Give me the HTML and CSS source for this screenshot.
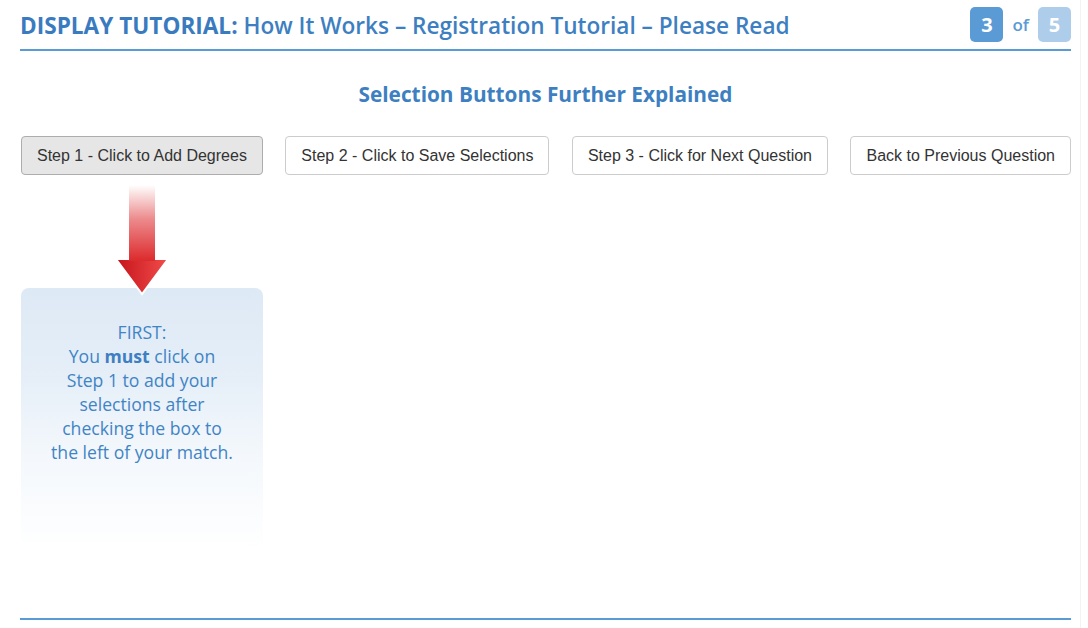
FILE: index.html
```html
<!DOCTYPE html>
<html lang="en">
<head>
<meta charset="utf-8">
<title>Display Tutorial</title>
<link rel="stylesheet" href="styles.css">
</head>
<body>
<div class="page">
  <header class="header">
    <h1 class="title"><strong>DISPLAY TUTORIAL:</strong> How It Works – Registration Tutorial – Please Read</h1>
    <div class="pager">
      <span class="badge badge-current">3</span>
      <span class="of">of</span>
      <span class="badge badge-total">5</span>
    </div>
  </header>

  <h2 class="subtitle">Selection Buttons Further Explained</h2>

  <div class="buttons">
    <button class="btn btn-active">Step 1 - Click to Add Degrees</button>
    <button class="btn">Step 2 - Click to Save Selections</button>
    <button class="btn">Step 3 - Click for Next Question</button>
    <button class="btn">Back to Previous Question</button>
  </div>

  <div class="hint-col">
    <svg class="arrow" width="54" height="112" viewBox="0 0 54 112" aria-hidden="true">
      <defs>
        <linearGradient id="shaft" x1="0" y1="0" x2="0" y2="1">
          <stop offset="0" stop-color="#ffffff"/>
          <stop offset="0.45" stop-color="#ec8a8c"/>
          <stop offset="1" stop-color="#dc2a2c"/>
        </linearGradient>
        <linearGradient id="head" x1="0" y1="0" x2="1" y2="0">
          <stop offset="0" stop-color="#c4141a"/>
          <stop offset="1" stop-color="#f24c4c"/>
        </linearGradient>
      </defs>
      <polygon points="1,74 53,74 27,109" fill="url(#head)" stroke="#ffffff" stroke-width="2" stroke-linejoin="miter"/>
      <rect x="14" y="0" width="26" height="76" fill="url(#shaft)"/>
    </svg>
    <div class="hint">
      <p>FIRST:<br>You <b>must</b> click on<br>Step 1 to add your<br>selections after<br>checking the box to<br>the left of your match.</p>
    </div>
  </div>

  <div class="spacer"></div>
  <footer class="footer"></footer>
</div>
</body>
</html>
```

FILE: styles.css
```css
* { box-sizing: border-box; }

html, body {
  margin: 0;
  padding: 0;
  background: #ffffff;
}

body {
  font-family: "Open Sans", "Liberation Sans", sans-serif;
}

.page {
  width: 1081px;
  height: 628px;
  padding: 0 9px 0 20px;
  border-right: 1px solid #f3f3f3;
  display: flex;
  flex-direction: column;
}

.header {
  display: flex;
  align-items: center;
  justify-content: space-between;
  padding: 7px 0 7px 0;
  border-bottom: 2px solid #5b9bd5;
}

.title {
  margin: 0;
  font-size: 22.6px;
  font-weight: 600;
  color: #3d7fc1;
  line-height: 28px;
  letter-spacing: 0;
  position: relative;
  top: 1px;
}

.title strong {
  font-weight: 700;
  color: #3a7bbf;
}

.pager {
  display: flex;
  align-items: center;
}

.badge {
  width: 33px;
  height: 35px;
  border-radius: 5px;
  display: flex;
  align-items: center;
  justify-content: center;
  color: #ffffff;
  font-weight: 700;
  font-size: 20px;
}

.badge-current { background: #5b9bd5; }
.badge-total { background: #aecdeb; }

.of {
  margin: 0 9px 0 9px;
  color: #5b9bd5;
  font-weight: 600;
  font-size: 17px;
}

.subtitle {
  margin: 29px 0 0 0;
  text-align: center;
  font-size: 20.8px;
  line-height: 28px;
  font-weight: 700;
  color: #3d7fc1;
}

.buttons {
  margin-top: 28px;
  display: flex;
  justify-content: space-between;
  padding-left: 1px;
}

.btn {
  height: 39px;
  padding: 0 15px;
  font-family: "Liberation Sans", Arial, sans-serif;
  font-size: 16px;
  color: #333333;
  background: #ffffff;
  border: 1px solid #cccccc;
  border-radius: 4px;
}

.btn-active {
  background: #e6e6e6;
  border-color: #adadad;
}

.hint-col {
  width: 242px;
  margin-left: 1px;
  display: flex;
  flex-direction: column;
  align-items: center;
}

.arrow {
  display: block;
  margin-top: 10px;
  position: relative;
  z-index: 1;
}

.hint {
  width: 242px;
  height: 262px;
  margin-top: -9px;
  border-radius: 8px;
  background: linear-gradient(to bottom, #dde9f5 0%, #e6eff8 35%, #f4f8fc 65%, #ffffff 100%);
  padding-top: 32px;
  text-align: center;
}

.hint p {
  margin: 0;
  font-size: 17.6px;
  line-height: 24px;
  color: #3f84c5;
}

.hint b { font-weight: 700; color: #3d7fc1; }

.spacer { flex: 1; }

.footer {
  height: 10px;
  border-top: 2px solid #5b9bd5;
}
```
